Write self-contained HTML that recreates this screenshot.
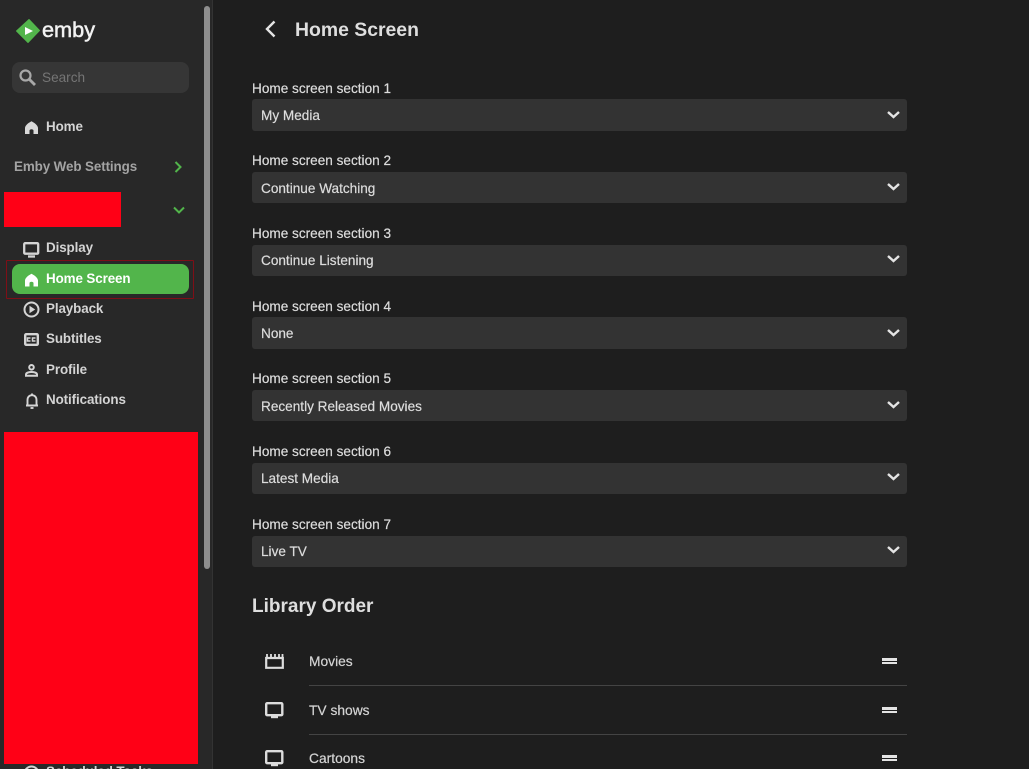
<!DOCTYPE html>
<html><head><meta charset="utf-8"><style>
html,body{margin:0;padding:0;width:1029px;height:769px;overflow:hidden;background:#1e1e1e;font-family:"Liberation Sans",sans-serif;}
#root{position:relative;width:1029px;height:769px;overflow:hidden;background:#1e1e1e}
.a{position:absolute}
.t{position:absolute;white-space:nowrap;line-height:18px;height:18px}
.n{left:46px;font-size:13.4px;font-weight:bold;color:#d4d4d4;letter-spacing:-.1px}
.l{left:252px;font-size:13.6px;color:#dcdcdc;-webkit-text-stroke:.2px #dcdcdc}
.s{position:absolute;left:252px;width:655px;height:32px;background:#333;border-radius:3px}
.s span{position:absolute;left:9px;top:8px;font-size:13.6px;line-height:18px;color:#dcdcdc;-webkit-text-stroke:.2px #dcdcdc}
.s svg{position:absolute;left:635px;top:10px}
.s.b svg{top:11px}
.s.u span{top:7px}
.s.u svg{top:9px}
.r{left:309px;font-size:13.8px;color:#d4d4d4;-webkit-text-stroke:.2px #d4d4d4}
.h{position:absolute;left:882px;width:15px;height:2px;background:#e4e4e4}
.d{position:absolute;left:309px;width:598px;height:1px;background:#444}
svg{position:absolute;overflow:visible}
</style></head><body><div id="root">
<div class="a" style="left:0;top:0;width:212px;height:769px;background:#282828"></div>
<div class="a" style="left:212px;top:0;width:1px;height:769px;background:#333"></div>
<div class="a" style="left:204px;top:6px;width:6px;height:563px;background:#8e8e8e;border-radius:3px"></div>

<svg style="left:15px;top:18px" width="26" height="26" viewBox="0 0 26 26"><path d="M14 1.5 24.5 12.5 13 24.5 1.5 13Z" fill="#52b54b" stroke="#52b54b" stroke-linejoin="round"/><path d="M10 9 18 13 10 17Z" fill="#fff"/></svg>
<div class="t" style="left:42px;top:15px;font-size:21.7px;line-height:30px;height:30px;color:#f2f2f2;-webkit-text-stroke:.5px #f2f2f2">emby</div>

<div class="a" style="left:12px;top:62px;width:177px;height:31px;background:#363636;border-radius:8px"></div>
<svg style="left:19px;top:69px" width="17" height="17" viewBox="0 0 17 17" fill="none" stroke="#a8a8a8" stroke-width="2.2"><circle cx="6.5" cy="6.5" r="5"/><path d="M10.5 10.5 16 16" stroke-width="2.8"/></svg>
<div class="t" style="left:42px;top:69px;font-size:13.6px;color:#757575">Search</div>

<svg style="left:25px;top:121px" width="13" height="13" viewBox="0 0 13 13"><path d="M6.5.2C8.5 1.2 13 4 13 7V13H8.5V9.5C8.5 8.7 7.5 8.2 6.5 8.2S4.5 8.7 4.5 9.5V13H0V7C0 4 4.5 1.2 6.5.2Z" fill="#d8d8d8"/></svg>
<div class="t n" style="top:118px">Home</div>
<div class="t" style="left:14px;top:158px;font-size:13.4px;font-weight:bold;color:#a3a3a3;letter-spacing:-.1px">Emby Web Settings</div>
<svg style="left:174px;top:161px" width="8" height="12" viewBox="0 0 8 12" fill="none" stroke="#52b54b" stroke-width="2"><path d="M1.5 1 6.5 6 1.5 11"/></svg>
<div class="a" style="left:4px;top:192px;width:117px;height:35px;background:#ff0016"></div>
<svg style="left:173px;top:206px" width="12" height="8" viewBox="0 0 12 8" fill="none" stroke="#52b54b" stroke-width="2"><path d="M1 1.5 6 6.5 11 1.5"/></svg>

<svg style="left:23px;top:242px" width="17" height="16" viewBox="0 0 17 16" fill="none" stroke="#d4d4d4" stroke-width="2.3"><rect x="1.2" y="1.2" width="14" height="10.5" rx="1"/><path d="M5 14.5H12"/></svg>
<div class="t n" style="top:239px">Display</div>

<div class="a" style="left:6px;top:260px;width:186px;height:37px;border:1.5px solid #7f0f17;border-radius:1px"></div>
<div class="a" style="left:12px;top:264px;width:177px;height:30px;background:#52b54b;border-radius:8px"></div>
<svg style="left:25px;top:273px" width="13" height="14" viewBox="0 0 13 13"><path d="M6.5.2C8.5 1.2 13 4 13 7V13H8.5V9.5C8.5 8.7 7.5 8.2 6.5 8.2S4.5 8.7 4.5 9.5V13H0V7C0 4 4.5 1.2 6.5.2Z" fill="#fff"/></svg>
<div class="t n" style="top:270px;color:#fff">Home Screen</div>

<svg style="left:23px;top:301px" width="17" height="17" viewBox="0 0 17 17" fill="none" stroke="#d4d4d4" stroke-width="2"><circle cx="8.5" cy="8.5" r="7"/><path d="M6.5 4.8 12.2 8.5 6.5 12.2Z" fill="#d4d4d4" stroke="none"/></svg>
<div class="t n" style="top:300px">Playback</div>

<svg style="left:24px;top:333px" width="15" height="13" viewBox="0 0 15 13"><rect x="1.2" y="1.2" width="12.6" height="10.6" rx="1" fill="none" stroke="#d4d4d4" stroke-width="2.4"/><path d="M6.5 5H3.5V8H6.5M11.5 5H8.5V8H11.5" fill="none" stroke="#d4d4d4" stroke-width="1.5"/></svg>
<div class="t n" style="top:330px">Subtitles</div>

<svg style="left:25px;top:364px" width="13" height="13" viewBox="0 0 13 13" fill="none" stroke="#d4d4d4" stroke-width="2"><circle cx="6.5" cy="3.3" r="2.3"/><path d="M1 11.8V10.5C1 8.8 4 8 6.5 8S12 8.8 12 10.5V11.8Z"/></svg>
<div class="t n" style="top:361px">Profile</div>

<svg style="left:25px;top:393px" width="14" height="16" viewBox="0 0 14 16" fill="none" stroke="#d4d4d4" stroke-width="1.9"><path d="M1 12.5H13M2.5 12.5V7C2.5 4 4.5 2.2 7 2.2S11.5 4 11.5 7V12.5"/><path d="M7 .5V2"/><path d="M5.5 15H8.5"/></svg>
<div class="t n" style="top:391px">Notifications</div>

<div class="a" style="left:4px;top:432px;width:194px;height:332px;background:#ff0016"></div>
<svg style="left:23px;top:765px" width="17" height="17" viewBox="0 0 17 17" fill="none" stroke="#d4d4d4" stroke-width="2"><circle cx="8.5" cy="8.5" r="7"/></svg>
<div class="t n" style="top:763px">Scheduled Tasks</div>

<svg style="left:264px;top:20px" width="12" height="18" viewBox="0 0 12 18" fill="none" stroke="#e4e4e4" stroke-width="2.4"><path d="M10.5 1.5 3 9 10.5 16.5"/></svg>
<div class="t" style="left:295px;top:17px;font-size:19.4px;line-height:26px;height:26px;font-weight:bold;color:#dedede">Home Screen</div>

<div class="t l" style="top:80px">Home screen section 1</div>
<div class="s b" style="top:99px"><span>My Media</span><svg width="13" height="10" viewBox="0 0 13 10" fill="none" stroke="#e4e4e4" stroke-width="2.4"><path d="M1 2 6.5 7 12 2"/></svg></div>
<div class="t l" style="top:152px">Home screen section 2</div>
<div class="s" style="top:172px;height:31px"><span>Continue Watching</span><svg width="13" height="10" viewBox="0 0 13 10" fill="none" stroke="#e4e4e4" stroke-width="2.4"><path d="M1 2 6.5 7 12 2"/></svg></div>
<div class="t l" style="top:225px">Home screen section 3</div>
<div class="s u" style="top:245px;height:31px"><span>Continue Listening</span><svg width="13" height="10" viewBox="0 0 13 10" fill="none" stroke="#e4e4e4" stroke-width="2.4"><path d="M1 2 6.5 7 12 2"/></svg></div>
<div class="t l" style="top:298px">Home screen section 4</div>
<div class="s b" style="top:317px"><span>None</span><svg width="13" height="10" viewBox="0 0 13 10" fill="none" stroke="#e4e4e4" stroke-width="2.4"><path d="M1 2 6.5 7 12 2"/></svg></div>
<div class="t l" style="top:370px">Home screen section 5</div>
<div class="s" style="top:390px;height:31px"><span>Recently Released Movies</span><svg width="13" height="10" viewBox="0 0 13 10" fill="none" stroke="#e4e4e4" stroke-width="2.4"><path d="M1 2 6.5 7 12 2"/></svg></div>
<div class="t l" style="top:443px">Home screen section 6</div>
<div class="s u" style="top:463px;height:31px"><span>Latest Media</span><svg width="13" height="10" viewBox="0 0 13 10" fill="none" stroke="#e4e4e4" stroke-width="2.4"><path d="M1 2 6.5 7 12 2"/></svg></div>
<div class="t l" style="top:516px">Home screen section 7</div>
<div class="s u" style="top:536px;height:31px"><span>Live TV</span><svg width="13" height="10" viewBox="0 0 13 10" fill="none" stroke="#e4e4e4" stroke-width="2.4"><path d="M1 2 6.5 7 12 2"/></svg></div>

<div class="t" style="left:252px;top:594px;font-size:19px;line-height:26px;height:26px;font-weight:bold;color:#dedede">Library Order</div>

<svg style="left:265px;top:653px" width="19" height="16" viewBox="0 0 19 16" fill="none" stroke="#dcdcdc" stroke-width="2.2"><path d="M1.2 5H17.8V14.8H1.2Z"/><path d="M2 1V5M6 1V5M10 1V5M14 1V5M17.5 1V5" stroke-width="1.8"/></svg>
<div class="t r" style="top:653px">Movies</div>
<div class="h" style="top:658px;height:3px"></div><div class="h" style="top:662px"></div>
<div class="d" style="top:685px"></div>

<svg style="left:265px;top:702px" width="19" height="17" viewBox="0 0 19 17" fill="none" stroke="#dcdcdc" stroke-width="2.4"><rect x="1.2" y="1.2" width="16.1" height="12" rx="1"/><path d="M6 15H13"/></svg>
<div class="t r" style="top:702px">TV shows</div>
<div class="h" style="top:707px;height:3px"></div><div class="h" style="top:711px"></div>
<div class="d" style="top:734px"></div>

<svg style="left:265px;top:750px" width="19" height="17" viewBox="0 0 19 17" fill="none" stroke="#dcdcdc" stroke-width="2.4"><rect x="1.2" y="1.2" width="16.1" height="12" rx="1"/><path d="M6 15H13"/></svg>
<div class="t r" style="top:750px">Cartoons</div>
<div class="h" style="top:755px;height:3px"></div><div class="h" style="top:759px"></div>
</div></body></html>
